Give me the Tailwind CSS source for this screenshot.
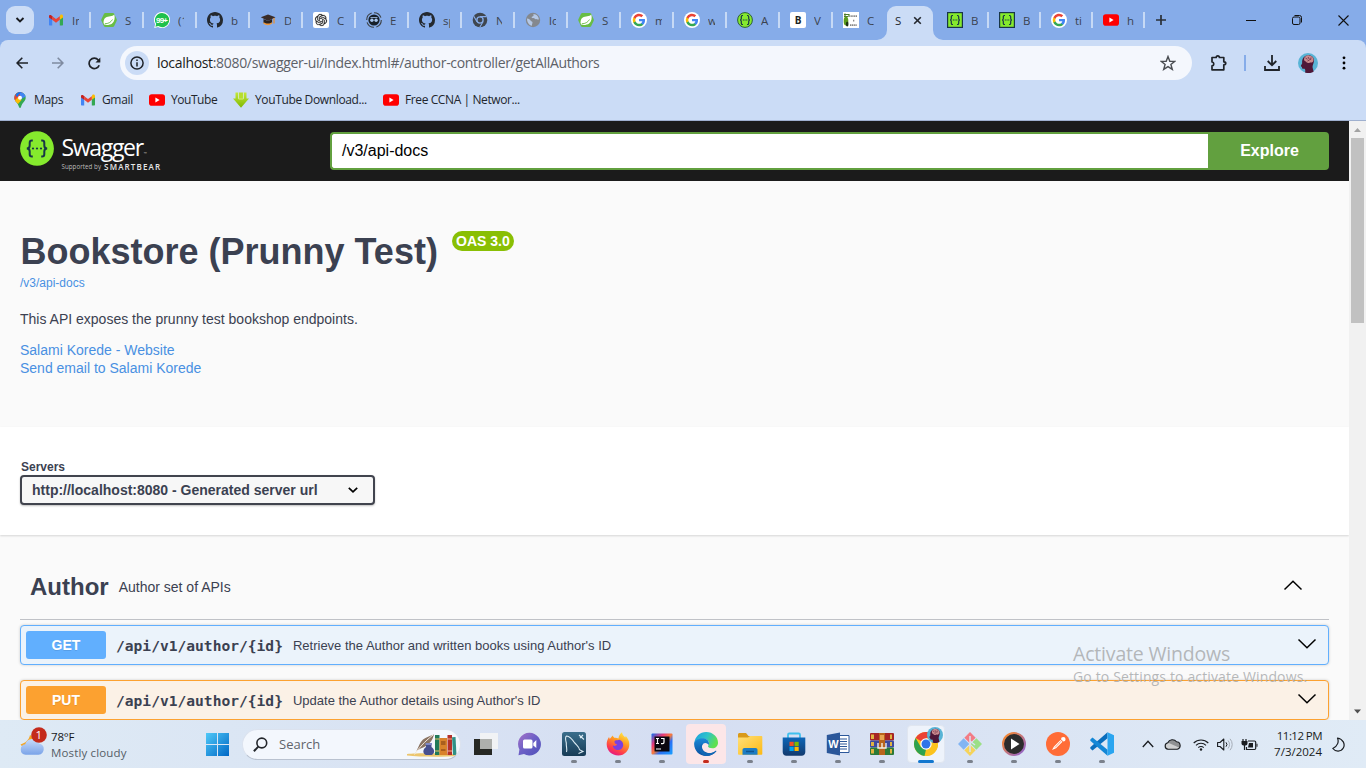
<!DOCTYPE html>
<html lang="en">
<head>
<meta charset="utf-8">
<title>Swagger UI</title>
<script src="https://cdn.jsdelivr.net/npm/@tailwindcss/browser@4"></script>
</head>
<body class="w-[1366px] h-[768px] overflow-hidden bg-[#cbdcf6] font-['Open_Sans','Noto_Sans',sans-serif] flex flex-col">
<svg class="absolute w-0 h-0">
  <defs>
    <linearGradient id="gEdge" x1="0" y1="0" x2="1" y2="0.4"><stop offset="0" stop-color="#1b9de2"/><stop offset=".55" stop-color="#2fc3c9"/><stop offset="1" stop-color="#5fe04f"/></linearGradient>
    <linearGradient id="gEdge2" x1="0" y1="0" x2="0" y2="1"><stop offset="0" stop-color="#1a8ad8"/><stop offset="1" stop-color="#0c4f9e"/></linearGradient>
    <linearGradient id="gWin" x1="0" y1="0" x2="1" y2="1"><stop offset="0" stop-color="#4fc9f8"/><stop offset="1" stop-color="#0067c5"/></linearGradient>
    <linearGradient id="gIJ" x1="0" y1="0" x2="1" y2="1"><stop offset="0" stop-color="#0e6ff0"/><stop offset=".3" stop-color="#e9397a"/><stop offset=".5" stop-color="#f97b3b"/><stop offset=".65" stop-color="#2a6ff5"/><stop offset="1" stop-color="#18a0ff"/></linearGradient>
    <linearGradient id="gFF" x1="0.8" y1="0" x2="0.3" y2="1"><stop offset="0" stop-color="#fff04a"/><stop offset=".4" stop-color="#ff9a22"/><stop offset=".75" stop-color="#ff3f4a"/><stop offset="1" stop-color="#e31587"/></linearGradient>
    <linearGradient id="gChat" x1="0" y1="0" x2="1" y2="1"><stop offset="0" stop-color="#a573c8"/><stop offset=".5" stop-color="#6b5fc6"/><stop offset="1" stop-color="#4f50b8"/></linearGradient>
    <linearGradient id="gFold" x1="0" y1="0" x2="1" y2="1"><stop offset="0" stop-color="#ffe07a"/><stop offset="1" stop-color="#fdb913"/></linearGradient>
    <linearGradient id="gSql" x1="0" y1="0" x2="0" y2="1"><stop offset="0" stop-color="#3a6e8c"/><stop offset="1" stop-color="#173b56"/></linearGradient>
    <linearGradient id="gMed" x1="0" y1="0" x2="1" y2="1"><stop offset="0" stop-color="#ff8a1f"/><stop offset="1" stop-color="#8b62d8"/></linearGradient>
    <linearGradient id="gCloud" x1="0" y1="0" x2="0" y2="1"><stop offset="0" stop-color="#c8dcfb"/><stop offset="1" stop-color="#7aa3e8"/></linearGradient>
    <linearGradient id="gStore" x1="0" y1="0" x2="0" y2="1"><stop offset="0" stop-color="#0c66b8"/><stop offset="1" stop-color="#133a6e"/></linearGradient>
    <linearGradient id="gDl" x1="0" y1="0" x2="0" y2="1"><stop offset="0" stop-color="#c4e83a"/><stop offset="1" stop-color="#7fb800"/></linearGradient>
  </defs>
  <symbol id="gmail" viewBox="0 0 16 16"><path d="M1 4v8.5c0 .6.4 1 1 1h2.2V7z" fill="#4285f4"/><path d="M15 4v8.5c0 .6-.4 1-1 1h-2.200V7z" fill="#34a853"/><path d="M11.800 4.200V7.800L15 5.500V4c0-1.400-1.500-2-2.500-1.200z" fill="#fbbc04"/><path d="M4.200 7.800V4.200L8 7l3.800-2.800v3.600L8 10.700z" fill="#ea4335"/><path d="M1 4v1.500l3.200 2.300V4.200l-.7-.6C2.400 2.700 1 3.200 1 4z" fill="#c5221f"/></symbol>
  <symbol id="spring" viewBox="0 0 16 16"><path d="M4.300 1h7.600c.6 0 1 .3 1.300.8l2.500 5.400c.2.500.2 1 0 1.500l-2.500 5.400c-.3.600-.8.900-1.300.9H4.300c-.6 0-1-.3-1.300-.8L.4 8.700a1.600 1.600 0 0 1 0-1.500L3 1.800C3.300 1.300 3.800 1 4.300 1z" fill="#68bd45"/><path d="M13.300 2.600c.9 3.400.3 7-2.200 8.900-1.900 1.400-5.600 1.900-8 1.100-1.200-2.400-.5-5.800 1.700-7.100C7.200 4.100 11.500 5 13.300 2.600z" fill="#fff"/><path d="M3.800 11.700c3.200.1 6-1.200 7.700-4.200" stroke="#68bd45" stroke-width=".9" fill="none"/></symbol>
  <symbol id="github" viewBox="0 0 16 16"><path fill="#24292f" d="M8 0C3.580 0 0 3.580 0 8c0 3.540 2.290 6.530 5.470 7.590.4.070.55-.17.55-.38 0-.19-.01-.82-.01-1.490-2.010.37-2.530-.49-2.690-.94-.09-.23-.48-.94-.82-1.130-.28-.15-.68-.52-.01-.53.63-.01 1.080.58 1.230.82.72 1.210 1.870.87 2.330.66.07-.52.28-.87.51-1.070-1.780-.2-3.640-.89-3.640-3.950 0-.87.31-1.590.82-2.150-.08-.2-.36-1.020.08-2.120 0 0 .67-.21 2.200.82.64-.18 1.320-.27 2-.27s1.360.09 2 .27c1.530-1.040 2.200-.82 2.200-.82.44 1.100.16 1.920.08 2.120.51.56.82 1.270.82 2.150 0 3.070-1.870 3.750-3.650 3.950.29.25.54.73.54 1.480 0 1.070-.01 1.930-.01 2.200 0 .21.15.46.55.38A8.010 8.010 0 0 0 16 8c0-4.420-3.580-8-8-8z"/></symbol>
  <symbol id="google" viewBox="0 0 16 16"><circle cx="8" cy="8" r="8" fill="#fff"/><g transform="translate(1.700 1.700) scale(.7)"><path d="M17.600 9.200c0-.6-.1-1.200-.2-1.800H9v3.500h4.800a4.100 4.100 0 0 1-1.800 2.700v2.300h2.900c1.700-1.600 2.700-3.900 2.700-6.700z" fill="#4285f4"/><path d="M9 18c2.400 0 4.500-.8 6-2.200l-3-2.200c-.8.500-1.800.9-3 .9-2.300 0-4.300-1.600-5-3.700H1v2.300A9 9 0 0 0 9 18z" fill="#34a853"/><path d="M4 10.700a5.400 5.400 0 0 1 0-3.400V5H1a9 9 0 0 0 0 8z" fill="#fbbc05"/><path d="M9 3.600c1.300 0 2.500.5 3.400 1.300L15 2.300A9 9 0 0 0 1 5l3 2.300C4.700 5.200 6.700 3.600 9 3.600z" fill="#ea4335"/></g></symbol>
  <symbol id="yt" viewBox="0 0 16 16"><rect x="0" y="2.300" width="16" height="11.400" rx="2.800" fill="#f00"/><path d="M6.400 5.600v4.800L10.600 8z" fill="#fff"/></symbol>
  <symbol id="braces" viewBox="0 0 16 16"><g fill="none" stroke="#173647" stroke-width="1.200"><path d="M6 3.500H5.400C4.600 3.500 4.300 4 4.300 4.800V6.500C4.300 7.500 3.800 8 3 8c.8 0 1.300.5 1.300 1.500v1.700c0 .8.300 1.300 1.100 1.300H6"/><path d="M10 3.500h.6c.8 0 1.100.5 1.100 1.300V6.500c0 1 .5 1.500 1.300 1.500-.8 0-1.300.5-1.300 1.500v1.700c0 .8-.3 1.300-1.100 1.300H10"/><path d="M5.800 8h4.600" stroke-dasharray="1.100 .6"/></g></symbol>
  <symbol id="swsq" viewBox="0 0 16 16"><rect x=".6" y=".6" width="14.800" height="14.800" fill="#85ea2d" stroke="#173647" stroke-width="1.200"/><use href="#braces"/></symbol>
  <symbol id="swrd" viewBox="0 0 16 16"><circle cx="8" cy="8" r="7.400" fill="#85ea2d" stroke="#2c5f3a" stroke-width="1"/><use href="#braces"/></symbol>
  <symbol id="avatar" viewBox="0 0 20 20"><circle cx="10" cy="10" r="10" fill="#58b4d6"/><path d="M7 19.500c.6-2 .2-3.500-.5-3.800-1.800.3-2.600 0-2.500-1.500-.1-.7-1.400-.8-1-1.600l1.200-2.300C3.600 6 6 2.300 10.500 2.200c4 0 6 3 5.300 6.800-.4 2.200-1.500 3.500-1.200 5.500l1 4.300c-2.500 1.500-6 1.700-8.600.7z" fill="#4e1738"/><path d="M6 6c.5-2.800 3-4 5-3.600 2.600.1 4.600 2 4.500 4.500-.1 2.200-1.800 3.100-3.500 2.500-1.500 1-3.700.4-4-.8C6.700 8.500 6 7.500 6 6z" fill="#c98a8e"/><path d="M7.500 5l2 1.300M10 4l1.500 2.500M13 4.500l-.5 2.500M9.500 8l2-1" stroke="#6b2740" stroke-width=".8"/></symbol>
  <symbol id="chev" viewBox="0 0 20 12"><path d="M1.500 1.500 10 9.800l8.500-8.300" fill="none" stroke="#000" stroke-width="1.500"/></symbol>
</svg>

<!-- Tab strip -->
<header class="h-[40px] shrink-0 bg-[#86ace9] flex items-stretch text-[11.500px] text-[#3b4350]">
  <div class="w-[38px] shrink-0 pl-[6px] pt-[6px]"><div class="w-[28px] h-[28px] rounded-[9px] bg-[#cbdcf6] flex items-center justify-center"><svg class="w-[10px] h-[8px]" viewBox="0 0 10 8"><path d="M1.500 2 5 5.500 8.500 2" fill="none" stroke="#1a1c20" stroke-width="1.900"/></svg></div></div>
  <div class="flex items-center">
    <div class="w-[53px] h-[16px] pl-[10px] flex border-r-2 border-[#c6d9f5]"><svg class="w-4 h-4 shrink-0"><use href="#gmail"/></svg><span class="ml-[8px] w-[7px] h-[17px] leading-[18px] overflow-hidden whitespace-nowrap">In</span></div>
    <div class="w-[53px] h-[16px] pl-[10px] flex border-r-2 border-[#c6d9f5]"><svg class="w-4 h-4 shrink-0"><use href="#spring"/></svg><span class="ml-[8px] w-[8px] h-[17px] leading-[18px] overflow-hidden whitespace-nowrap">S</span></div>
    <div class="w-[53px] h-[16px] pl-[10px] flex border-r-2 border-[#c6d9f5]"><svg class="w-4 h-4 shrink-0" viewBox="0 0 16 16"><path d="M8 0a8 8 0 1 1-4 14.900L.2 16l1-3.800A8 8 0 0 1 8 0z" fill="#fff"/><path d="M8 .9a7.100 7.100 0 1 1-3.700 13.100l-2.900.8.800-2.800A7.100 7.100 0 0 1 8 .9z" fill="#1fc14c"/><text x="8" y="11" font-size="8" font-weight="700" fill="#fff" text-anchor="middle" textLength="12" font-family="Liberation Sans">99+</text></svg><span class="ml-[8px] w-[6px] h-[17px] leading-[18px] overflow-hidden whitespace-nowrap">(1</span></div>
    <div class="w-[53px] h-[16px] pl-[10px] flex border-r-2 border-[#c6d9f5]"><svg class="w-4 h-4 shrink-0"><use href="#github"/></svg><span class="ml-[8px] w-[8px] h-[17px] leading-[18px] overflow-hidden whitespace-nowrap">b</span></div>
    <div class="w-[53px] h-[16px] pl-[10px] flex border-r-2 border-[#c6d9f5]"><svg class="w-4 h-4 shrink-0" viewBox="0 0 16 16"><path d="M8 2.500 15.500 5.300 8 9 .8 5.300z" fill="#3a2c28"/><path d="M3.500 7v4c2.500 1.800 6.500 1.800 8.600 0V7L8 9z" fill="#2a2321"/><path d="M3.500 10c2.500 2 6.500 2 8.600 0v1.700c-2.500 1.900-6.300 1.900-8.600 0z" fill="#f0993c"/><path d="M14 6v5.500" stroke="#e69138" stroke-width="1.300"/></svg><span class="ml-[8px] w-[7px] h-[17px] leading-[18px] overflow-hidden whitespace-nowrap">D</span></div>
    <div class="w-[53px] h-[16px] pl-[10px] flex border-r-2 border-[#c6d9f5]"><svg class="w-4 h-4 shrink-0" viewBox="0 0 16 16"><rect width="16" height="16" rx="2" fill="#fff"/><g transform="translate(2 2) scale(.5)"><path fill="#222" stroke="#222" stroke-width=".4" d="M22.282 9.821a5.985 5.985 0 0 0-.516-4.910 6.046 6.046 0 0 0-6.510-2.900A6.065 6.065 0 0 0 4.981 4.182a5.985 5.985 0 0 0-3.998 2.900 6.046 6.046 0 0 0 .743 7.097 5.980 5.980 0 0 0 .511 4.911 6.051 6.051 0 0 0 6.515 2.900A5.985 5.985 0 0 0 13.260 24a6.056 6.056 0 0 0 5.772-4.206 5.990 5.990 0 0 0 3.998-2.900 6.056 6.056 0 0 0-.748-7.073zm-9.022 12.608a4.476 4.476 0 0 1-2.876-1.041l.142-.080 4.778-2.759a.795.795 0 0 0 .393-.681v-6.737l2.020 1.169a.071.071 0 0 1 .038.052v5.583a4.504 4.504 0 0 1-4.495 4.494zM3.600 18.304a4.471 4.471 0 0 1-.535-3.014l.142.085 4.783 2.759a.771.771 0 0 0 .780 0l5.843-3.369v2.332a.080.080 0 0 1-.033.062L9.740 19.950a4.499 4.499 0 0 1-6.140-1.646zM2.341 7.896a4.485 4.485 0 0 1 2.366-1.973V11.600a.766.766 0 0 0 .388.677l5.815 3.354-2.020 1.169a.076.076 0 0 1-.071 0l-4.830-2.787A4.504 4.504 0 0 1 2.341 7.872zm16.596 3.856-5.833-3.387L15.119 7.200a.076.076 0 0 1 .071 0l4.830 2.791a4.494 4.494 0 0 1-.676 8.105v-5.678a.790.790 0 0 0-.407-.667zm2.011-3.023-.142-.085-4.774-2.782a.776.776 0 0 0-.785 0L9.409 9.230V6.897a.066.066 0 0 1 .028-.061l4.830-2.787a4.499 4.499 0 0 1 6.680 4.660zM8.307 12.863l-2.020-1.164a.080.080 0 0 1-.038-.057V6.075a4.499 4.499 0 0 1 7.376-3.454l-.142.081-4.778 2.758a.795.795 0 0 0-.393.682zm1.097-2.366 2.602-1.500 2.607 1.500v2.999l-2.597 1.500-2.607-1.500z"/></g></svg><span class="ml-[8px] w-[7px] h-[17px] leading-[18px] overflow-hidden whitespace-nowrap">C</span></div>
    <div class="w-[53px] h-[16px] pl-[10px] flex border-r-2 border-[#c6d9f5]"><svg class="w-4 h-4 shrink-0" viewBox="0 0 16 16"><circle cx="8" cy="8" r="7.300" fill="none" stroke="#3c4043" stroke-width="1.100" stroke-dasharray="9 2.400"/><circle cx="8" cy="8" r="5.600" fill="#17202a"/><circle cx="5.900" cy="8.200" r="1.700" fill="#a8c6ee"/><circle cx="10.100" cy="8.200" r="1.700" fill="#a8c6ee"/><path d="M4.500 5.500h7" stroke="#a8c6ee" stroke-width=".8"/></svg><span class="ml-[8px] w-[7px] h-[17px] leading-[18px] overflow-hidden whitespace-nowrap">E</span></div>
    <div class="w-[53px] h-[16px] pl-[10px] flex border-r-2 border-[#c6d9f5]"><svg class="w-4 h-4 shrink-0"><use href="#github"/></svg><span class="ml-[8px] w-[7px] h-[17px] leading-[18px] overflow-hidden whitespace-nowrap">sp</span></div>
    <div class="w-[53px] h-[16px] pl-[10px] flex border-r-2 border-[#c6d9f5]"><svg class="w-4 h-4 shrink-0" viewBox="0 0 16 16"><circle cx="8" cy="8" r="7.300" fill="#3f464e"/><circle cx="8" cy="8" r="3.100" fill="#3f464e" stroke="#86ace9" stroke-width="1.300"/><path d="M8 4.600h6.500M5 9.700 1.800 4.200M11 9.700l-3.200 5.600" stroke="#86ace9" stroke-width="1.100"/></svg><span class="ml-[8px] w-[6px] h-[17px] leading-[18px] overflow-hidden whitespace-nowrap">N</span></div>
    <div class="w-[53px] h-[16px] pl-[10px] flex border-r-2 border-[#c6d9f5]"><svg class="w-4 h-4 shrink-0" viewBox="0 0 16 16"><circle cx="8" cy="8" r="7.200" fill="#84888e"/><path d="M2 6.500c2 .2 3 1 3.500 2s2 .8 2 2-.7 2-.5 3.200C4 13.300 1.800 10 2 6.500zM8.500 1.900c-.3 1 .5 1.500-.3 2.200-1 .6-1.800.7-1.500 1.600.8.700 2.300.2 3.200 1 1 .8 2.400.6 4 .7-.2-3-2.300-5.300-5.400-5.500z" fill="#b4c8e6"/></svg><span class="ml-[8px] w-[7px] h-[17px] leading-[18px] overflow-hidden whitespace-nowrap">lo</span></div>
    <div class="w-[53px] h-[16px] pl-[10px] flex border-r-2 border-[#c6d9f5]"><svg class="w-4 h-4 shrink-0"><use href="#spring"/></svg><span class="ml-[8px] w-[8px] h-[17px] leading-[18px] overflow-hidden whitespace-nowrap">S</span></div>
    <div class="w-[53px] h-[16px] pl-[10px] flex border-r-2 border-[#c6d9f5]"><svg class="w-4 h-4 shrink-0"><use href="#google"/></svg><span class="ml-[8px] w-[7px] h-[17px] leading-[18px] overflow-hidden whitespace-nowrap">m</span></div>
    <div class="w-[53px] h-[16px] pl-[10px] flex border-r-2 border-[#c6d9f5]"><svg class="w-4 h-4 shrink-0"><use href="#google"/></svg><span class="ml-[8px] w-[7px] h-[17px] leading-[18px] overflow-hidden whitespace-nowrap">w</span></div>
    <div class="w-[53px] h-[16px] pl-[10px] flex border-r-2 border-[#c6d9f5]"><svg class="w-4 h-4 shrink-0"><use href="#swrd"/></svg><span class="ml-[8px] w-[8px] h-[17px] leading-[18px] overflow-hidden whitespace-nowrap">A</span></div>
    <div class="w-[53px] h-[16px] pl-[10px] flex border-r-2 border-[#c6d9f5]"><span class="w-4 h-4 shrink-0 rounded-[2px] bg-white text-[#1b1f24] text-[10px] leading-4 text-center font-bold">B</span><span class="ml-[8px] w-[8px] h-[17px] leading-[18px] overflow-hidden whitespace-nowrap">V</span></div>
    <div class="w-[53px] h-[16px] pl-[10px] flex"><svg class="w-4 h-4 shrink-0" viewBox="0 0 16 16"><rect width="16" height="16" fill="#fff"/><path d="M1 2.500h4.500M1 4.500h4M2 1.500v3M6 2v3" stroke="#4e7a2a" stroke-width="1.200"/><ellipse cx="3" cy="9" rx="2.300" ry="4.500" fill="#5b9a1e"/><ellipse cx="4.200" cy="12" rx="1.300" ry="2.500" fill="#1d3310"/><path d="M7.500 4.200h6.500M10 8.700h1.500M7 13.200h7" stroke="#888" stroke-width="1.800" stroke-dasharray="1.300 .5"/></svg><span class="ml-[8px] w-[7px] h-[17px] leading-[18px] overflow-hidden whitespace-nowrap">C</span></div>
  </div>
  <div class="relative w-[46px] mt-[6px] ml-[1px] mr-[4px] rounded-t-[9px] bg-[#cbdcf6] flex items-center pl-[8px] pb-[6px] text-[#23272e]">
    <span class="w-[8px] mt-[2px]">S</span>
    <svg class="w-[9px] h-[9px] ml-[10px]" viewBox="0 0 9 9"><path d="M1.200 1.200l6.600 6.600M7.800 1.200 1.200 7.800" stroke="#23272e" stroke-width="1.600"/></svg>
    <svg class="absolute -left-[10px] bottom-0 w-[10px] h-[10px]" viewBox="0 0 10 10"><path d="M10 0v10H0A10 10 0 0 0 10 0z" fill="#cbdcf6"/></svg>
    <svg class="absolute -right-[10px] bottom-0 w-[10px] h-[10px]" viewBox="0 0 10 10"><path d="M0 0v10h10A10 10 0 0 1 0 0z" fill="#cbdcf6"/></svg>
  </div>
  <div class="flex items-center">
    <div class="w-[52px] h-[16px] pl-[10px] flex border-r-2 border-[#c6d9f5]"><svg class="w-4 h-4 shrink-0"><use href="#swsq"/></svg><span class="ml-[8px] w-[7px] h-[17px] leading-[18px] overflow-hidden whitespace-nowrap">B</span></div>
    <div class="w-[52px] h-[16px] pl-[10px] flex border-r-2 border-[#c6d9f5]"><svg class="w-4 h-4 shrink-0"><use href="#swsq"/></svg><span class="ml-[8px] w-[7px] h-[17px] leading-[18px] overflow-hidden whitespace-nowrap">B</span></div>
    <div class="w-[52px] h-[16px] pl-[10px] flex border-r-2 border-[#c6d9f5]"><svg class="w-4 h-4 shrink-0"><use href="#google"/></svg><span class="ml-[8px] w-[8px] h-[17px] leading-[18px] overflow-hidden whitespace-nowrap">ti</span></div>
    <div class="w-[52px] h-[16px] pl-[10px] flex border-r-2 border-[#c6d9f5]"><svg class="w-4 h-4 shrink-0"><use href="#yt"/></svg><span class="ml-[8px] w-[7px] h-[17px] leading-[18px] overflow-hidden whitespace-nowrap">h</span></div>
    <svg class="ml-[11px] w-[10px] h-[10px]" viewBox="0 0 10 10"><path d="M5 0v10M0 5h10" stroke="#2a2f37" stroke-width="1.700"/></svg>
  </div>
  <div class="ml-auto pr-[17px] flex items-center gap-[36px]">
    <svg class="w-[10px] h-[10px]" viewBox="0 0 10 10"><path d="M0 5.500h10" stroke="#111" stroke-width="1"/></svg>
    <svg class="w-[10px] h-[10px]" viewBox="0 0 10 10"><rect x=".5" y="2" width="7.500" height="7.500" rx="1.500" fill="none" stroke="#111"/><path d="M2.500.5H7.500A2 2 0 0 1 9.500 2.500V7.500" fill="none" stroke="#111"/></svg>
    <svg class="w-[11px] h-[11px]" viewBox="0 0 11 11"><path d="M.5.500l10 10M10.500.500l-10 10" stroke="#111" stroke-width="1.100"/></svg>
  </div>
</header>

<!-- Toolbar and bookmarks -->
<section class="h-[81px] shrink-0 bg-[#86ace9]">
  <div class="h-full rounded-t-[8px] bg-[#cbdcf6] border-b border-[#9fb0cf] flex flex-col">
    <div class="h-[46px] flex items-center">
      <svg class="ml-[16px] w-[12px] h-[12px]" viewBox="0 0 12 12"><path d="M12 6H1.200M6.300.800 1.100 6l5.200 5.200" fill="none" stroke="#1f2329" stroke-width="1.600"/></svg>
      <svg class="ml-[24px] w-[12px] h-[12px]" viewBox="0 0 12 12"><path d="M0 6h10.800M5.700.800 10.900 6l-5.200 5.200" fill="none" stroke="#7f8ba0" stroke-width="1.600"/></svg>
      <svg class="ml-[24px] w-[13px] h-[13px]" viewBox="0 0 13 13"><path d="M11.200 8.200A5.200 5.200 0 1 1 10.300 3l1.500 1.500" fill="none" stroke="#1f2329" stroke-width="1.700"/><path d="M12.300.600v4.900H7.500z" fill="#1f2329"/></svg>
      <div class="ml-[19px] w-[1072px] h-[34px] rounded-full bg-[#f4f7fd] flex items-center">
        <div class="ml-[5px] w-[24px] h-[24px] rounded-full bg-[#cbdcf6] flex items-center justify-center"><svg class="w-[14px] h-[14px]" viewBox="0 0 14 14"><circle cx="7" cy="7" r="6.100" fill="none" stroke="#1f2329" stroke-width="1.500"/><path d="M7 6.200v4.200M7 3.500v1.500" stroke="#1f2329" stroke-width="1.500"/></svg></div>
        <span class="ml-[8px] text-[14px] leading-[20px] tracking-[-0.32px] whitespace-nowrap text-[#5d6168]"><span class="text-[#1b1d21]">localhost</span>:8080/swagger-ui/index.html#/author-controller/getAllAuthors</span>
        <svg class="ml-auto mr-[16px] w-[16px] h-[16px]" viewBox="0 0 16 16"><path d="M8 1.500l1.800 4.700 5 .2-3.900 3.100 1.400 4.900L8 11.600l-4.300 2.800 1.400-4.900L1.200 6.400l5-.2z" fill="none" stroke="#4a4d52" stroke-width="1.400"/></svg>
      </div>
      <svg class="ml-[18px] w-[18px] h-[18px]" viewBox="0 0 18 18"><path d="M2 3.500h4.200c0-2.300 3.200-2.300 3.200 0h4.400v4.300c2.600 0 2.600 3 0 3V15.800H2v-4c2.400-.2 2.400-3.600 0-3.800z" fill="none" stroke="#1f2329" stroke-width="1.700" stroke-linejoin="round"/></svg>
      <div class="ml-[16px] w-[2px] h-[16px] bg-[#86ace9]"></div>
      <svg class="ml-[18px] w-[16px] h-[18px]" viewBox="0 0 16 18"><path d="M8 1v10M3.700 7 8 11.200 12.300 7M1 12v4h14v-4" fill="none" stroke="#1f2329" stroke-width="1.800"/></svg>
      <svg class="ml-[18px] w-[20px] h-[20px]"><use href="#avatar"/></svg>
      <svg class="ml-[24px] w-[4px] h-[14px]" viewBox="0 0 4 14"><circle cx="2" cy="1.800" r="1.400"/><circle cx="2" cy="7" r="1.400"/><circle cx="2" cy="12.200" r="1.400"/></svg>
    </div>
    <div class="h-[28px] flex items-center text-[12px] tracking-[-0.35px] text-[#22262d] whitespace-nowrap">
      <svg class="ml-[12px] w-4 h-4" viewBox="0 0 16 16"><clipPath id="pin"><path d="M8 0a5.700 5.700 0 0 1 5.700 5.700c0 3.400-3.500 4.600-4.700 9.300-.3 1.300-1.700 1.300-2 0C5.800 10.300 2.300 9.100 2.300 5.700A5.700 5.700 0 0 1 8 0z"/></clipPath><g clip-path="url(#pin)"><path d="M0 0h16v16H0z" fill="#34a853"/><path d="M0-1h11L8 5.700 3 11H0z" fill="#ea4335"/><path d="M7-1h9v4.500L9 7z" fill="#4285f4"/><path d="M7-1h3L5 5.300 3.300 2.500z" fill="#1a73e8"/><path d="M2 9.500 6 5l3.500 3L6 12z" fill="#fbbc04"/></g><circle cx="8" cy="5.700" r="2" fill="#fff"/></svg>
      <span class="ml-[6px] w-[46px]">Maps</span>
      <svg class="w-4 h-4"><use href="#gmail"/></svg>
      <span class="ml-[6px] w-[47px]">Gmail</span>
      <svg class="w-4 h-4"><use href="#yt"/></svg>
      <span class="ml-[6px] w-[62px] tracking-[-0.45px]">YouTube</span>
      <svg class="w-4 h-4" viewBox="0 0 16 16"><path d="M2.500.5h2.700v6h5.600v-6h2.700v6H16L8 15.800 0 6.500h2.500z" fill="url(#gDl)"/><path d="M6 .5h4v7H6z" fill="#b6de2c"/><path d="M5.600.5v6.500h4.800V.5" fill="none" stroke="#dff0a0" stroke-width=".6"/></svg>
      <span class="ml-[6px] w-[128px] tracking-[-0.36px]">YouTube Download...</span>
      <svg class="w-4 h-4"><use href="#yt"/></svg>
      <span class="ml-[6px] tracking-[-0.4px]">Free CCNA | Networ...</span>
    </div>
  </div>
</section>

<!-- Page viewport -->
<main class="h-[599px] shrink-0 flex overflow-hidden font-['Liberation_Sans',Arial,sans-serif] text-[#3b4151] bg-[#fafafa]">
  <div class="w-[1349px] h-[599px] overflow-hidden">
    <div class="h-[60px] bg-[#1b1b1b] flex items-center pl-[20px] pr-[20px]">
      <div class="w-[310px] h-[60px] flex">
        <svg class="mt-[10px] w-[34px] h-[35px]" viewBox="0 0 34 35"><ellipse cx="17" cy="17.500" rx="16.900" ry="17.200" fill="#85ea2d"/><g fill="none" stroke="#173647" stroke-width="2"><path d="M12.800 9.500h-.9c-1.500 0-2.200.7-2.200 2.200v2.800c0 1.800-.7 3-2.900 3 2.200 0 2.900 1.200 2.900 3v2.800c0 1.500.7 2.200 2.200 2.200h.9"/><path d="M21.200 9.500h.9c1.500 0 2.200.7 2.200 2.200v2.800c0 1.800.7 3 2.900 3-2.200 0-2.900 1.200-2.900 3v2.800c0 1.500-.7 2.200-2.200 2.200h-.9"/></g><g fill="#173647"><circle cx="13" cy="17.500" r="1.100"/><circle cx="17" cy="17.500" r="1.100"/><circle cx="21" cy="17.500" r="1.100"/></g></svg>
        <div class="ml-[7.500px] mt-[12px] text-white font-['Open_Sans',sans-serif]">
          <div class="flex h-[29px]"><span class="text-[23px] leading-[29px] tracking-[-1.320px]">Swagger</span><span class="ml-[1px] text-[4px] leading-[42px] text-[#bbb]">™</span></div>
          <div class="flex items-center h-[10px] whitespace-nowrap"><span class="text-[6.200px] text-[#bdbdbd] tracking-[0.050px]">Supported by</span><span class="ml-[3px] text-[8px] font-semibold tracking-[1.150px] text-[#e6e6e6]">SMARTBEAR</span></div>
        </div>
      </div>
      <div class="w-[878px] h-[38px] border-2 border-r-0 border-[#62a03f] rounded-l-[4px] bg-white pl-[10px] leading-[34px] text-[16px] text-black">/v3/api-docs</div>
      <div class="w-[121px] h-[38px] bg-[#62a03f] rounded-r-[4px] pl-[2px] text-white font-bold text-[16px] leading-[37px] text-center">Explore</div>
    </div>
    <div class="h-[246px] pl-[20px] pt-[48px]">
      <div class="flex h-[45px] pl-[0.500px]"><h1 class="text-[36px] leading-[45px] font-bold whitespace-nowrap">Bookstore (Prunny Test)</h1><span class="ml-[14px] mt-[2px] w-[62px] h-[20px] rounded-full bg-[#89bf04] text-white text-[14px] font-bold leading-[20px] text-center whitespace-nowrap">OAS 3.0</span></div>
      <div class="text-[12px] leading-[18px] text-[#4990e2]">/v3/api-docs</div>
      <div class="mt-[17px] text-[14px] leading-[20px]">This API exposes the prunny test bookshop endpoints.</div>
      <div class="mt-[12px] text-[14px] leading-[18px] text-[#4990e2]">Salami Korede - Website<br>Send email to Salami Korede</div>
    </div>
    <div class="h-[108px] bg-white shadow-[0_1px_2px_rgba(0,0,0,0.15)] pl-[20px] pt-[32px]">
      <div class="text-[12px] leading-[16px] font-bold pl-[1px]">Servers</div>
      <div class="w-[355px] h-[30px] border-2 border-[#41444e] rounded-[4px] bg-[#f7f7f7] shadow-[0_1px_2px_rgba(0,0,0,0.25)] flex items-center pl-[10px] pr-[15px] text-[14px] font-bold"><span>http://localhost:8080 - Generated server url</span><svg class="ml-auto w-[10px] h-[6px]" viewBox="0 0 10 6"><path d="M.800.800 5 4.800 9.200.800" fill="none" stroke="#000" stroke-width="1.700"/></svg></div>
    </div>
    <div class="pl-[20px] pr-[20px] pt-[20px]">
      <div class="h-[65px] border-b border-[#c0c2c7] pl-[10px] pr-[26px] flex items-center">
        <h2 class="text-[24px] font-bold">Author</h2><span class="ml-[10px] text-[14px]">Author set of APIs</span>
        <svg class="ml-auto mb-[4px] w-[20px] h-[12px] rotate-180"><use href="#chev"/></svg>
      </div>
      <div class="mt-[5px] h-[40px] border border-[#61affe] rounded-[4px] bg-[#ebf3fb] shadow-[0_0_3px_rgba(0,0,0,0.19)] flex items-center pl-[5px] pr-[11px]">
        <span class="w-[80px] h-[28px] rounded-[3px] bg-[#61affe] text-white text-[14px] font-bold leading-[28px] text-center [text-shadow:0_1px_0_rgba(0,0,0,0.1)]">GET</span>
        <span class="ml-[10px] mt-[2px] font-['DejaVu_Sans_Mono',monospace] font-bold text-[14.600px]">/api/v1/author/{id}</span>
        <span class="ml-[10px] mt-[2px] text-[13px]">Retrieve the Author and written books using Author's ID</span>
        <svg class="ml-auto mb-[2px] w-[20px] h-[12px]"><use href="#chev"/></svg>
      </div>
      <div class="mt-[15px] h-[40px] border border-[#fca130] rounded-[4px] bg-[#fbf1e6] shadow-[0_0_3px_rgba(0,0,0,0.19)] flex items-center pl-[5px] pr-[11px]">
        <span class="w-[80px] h-[28px] rounded-[3px] bg-[#fca130] text-white text-[14px] font-bold leading-[28px] text-center [text-shadow:0_1px_0_rgba(0,0,0,0.1)]">PUT</span>
        <span class="ml-[10px] mt-[2px] font-['DejaVu_Sans_Mono',monospace] font-bold text-[14.600px]">/api/v1/author/{id}</span>
        <span class="ml-[10px] mt-[2px] text-[13px]">Update the Author details using Author's ID</span>
        <svg class="ml-auto mb-[2px] w-[20px] h-[12px]"><use href="#chev"/></svg>
      </div>
    </div>
  </div>
  <div class="w-[17px] bg-[#f1f1f1] flex flex-col items-center">
    <svg class="w-[17px] h-[17px]" viewBox="0 0 17 17"><path d="M5 11h7L8.500 7z" fill="#a3a3a3"/></svg>
    <div class="w-[13px] h-[185px] bg-[#c1c1c1]"></div>
    <svg class="mt-auto w-[17px] h-[17px]" viewBox="0 0 17 17"><path d="M5 6.500h7L8.500 10.500z" fill="#505050"/></svg>
  </div>
</main>

<!-- Windows activation watermark, over the page -->
<div class="absolute left-[1073px] top-[640px] text-[#a9abad]/85 whitespace-nowrap pointer-events-none">
  <div class="text-[19.500px] leading-[28px] tracking-[-0.180px]">Activate Windows</div>
  <div class="text-[14px] leading-[18px] tracking-[0.140px]">Go to Settings to activate Windows.</div>
</div>

<!-- Taskbar -->
<footer class="h-[48px] shrink-0 bg-linear-to-r from-[#deeaf5] via-[#d5def2] to-[#e0ebf6] flex items-center">
  <div class="w-[206px] h-full flex pl-[20px]">
    <svg class="mt-[5px] w-[28px] h-[36px]" viewBox="0 0 28 36"><path d="M10 10c-1 5-4.500 8-9.500 9.500C3 23 6.500 24 10 22l6-8z" fill="#f5a524"/><path d="M6 29.800a5.300 5.300 0 0 1-.3-10.500A7.300 7.300 0 0 1 19.500 18.500a5.700 5.700 0 0 1-.5 11.300z" fill="url(#gCloud)" transform="translate(-.5 0)"/><circle cx="19" cy="10" r="7.800" fill="#c42b1c"/><text x="18.900" y="14.100" font-size="11.500" fill="#fff" text-anchor="middle" font-family="Open Sans">1</text></svg>
    <div class="ml-[3px] mt-[9px] text-[11.500px] leading-[16px] whitespace-nowrap"><div class="text-[#15181c] tracking-[-0.200px]">78°F</div><div class="text-[#555d66] tracking-[0.150px]">Mostly cloudy</div></div>
  </div>
  <svg class="w-[23px] h-[23px]" viewBox="0 0 23 23"><path d="M0 0h11v11H0zM12 0h11v11H12zM0 12h11v11H0zM12 12h11v11H12z" fill="url(#gWin)"/></svg>
  <div class="ml-[13px] w-[219px] h-[31px] rounded-full bg-[#f3f7fd] border border-[#dbe2ee] border-b-[#b9c2d0] flex items-center overflow-hidden">
    <svg class="ml-[10px] w-[15px] h-[15px]" viewBox="0 0 15 15"><circle cx="8.800" cy="6" r="4.900" fill="none" stroke="#24272c" stroke-width="1.600"/><path d="M5.300 9.600.900 14.200" stroke="#24272c" stroke-width="2"/></svg>
    <span class="ml-[11px] mt-px text-[13px] text-[#5f646b]">Search</span>
    <svg class="ml-auto w-[54px] h-[29px]" viewBox="0 0 54 29"><path d="M1 24C10 23 35 23 54 24v2C36 27 14 27 1 25.500z" fill="#ecc66e"/><path d="M8.500 24C12 20 12.500 14 17 9.500 20 7 24 6 28 4.500c-1 5-4 9-8 11.500-4 2.300-7 3-9.500 5z" fill="#8a7463"/><path d="M8.500 24.500C13 18 18 12 27 5" stroke="#f3e9dc" stroke-width="1" fill="none"/><path d="M20 17c-3.500 2-3.500 7 0 8h5.500c3.500-1 3.500-6 0-8v-3H20z" fill="#47508f"/><rect x="19.500" y="13" width="6.500" height="2" fill="#7f88c4"/><rect x="29" y="5" width="4.500" height="20" fill="#1f7a58"/><path d="M29 9h4.500M29 21h4.500" stroke="#e9c46a"/><rect x="33.500" y="8" width="7.500" height="17" fill="#d9822b"/><path d="M35 12h4.500M35 14h4.500M35 20h4.500" stroke="#7b3a12"/><rect x="41.500" y="5" width="4.500" height="20" fill="#b5302a"/><path d="M41.500 9H46M41.500 21H46" stroke="#f0b58a"/><rect x="46.500" y="7" width="3.500" height="18" fill="#2f8f86" transform="rotate(-3 49 16)"/></svg>
  </div>
  <div class="ml-[3px] flex items-center">
    <div class="w-[44px] h-[48px] flex flex-col items-center pt-[12px]"><svg class="w-[24px] h-[24px]" viewBox="0 0 24 24"><path d="M0 7h18v16H0z" fill="#262824"/><path d="M6 1h18v16H6z" fill="#f4f5f5" fill-opacity=".9"/><path d="M6 7h12v10H6z" fill="#aeb0ad"/></svg></div>
    <div class="w-[44px] h-[48px] flex flex-col items-center pt-[12px]"><svg class="w-[24px] h-[24px]" viewBox="0 0 24 24"><path d="M11.500.8a11.300 11.300 0 1 1-5.500 21.100L.5 23.300l.9-5.800A11.300 11.300 0 0 1 11.500.8z" fill="url(#gChat)"/><rect x="5" y="7.500" width="9.500" height="9" rx="1.500" fill="#fff"/><path d="M15.300 11 18.300 8v8L15.300 13.500z" fill="#fff"/></svg></div>
    <div class="w-[44px] h-[48px] flex flex-col items-center pt-[12px]"><svg class="w-[24px] h-[24px]" viewBox="0 0 24 24"><rect width="24" height="24" rx="2.500" fill="url(#gSql)"/><path d="M4.500 20C5.500 17 4 15 4.300 11 3.500 8 2.800 5 4.500 4c3 .2 6 3.700 8 6.700 2 2.500 4.500 4 5 7l3.500 1.800-4.500 2M17 3l5 4.500M18 6l3-3" fill="none" stroke="#dcebf3" stroke-width="1.100"/></svg><i class="mt-[4px] w-[6px] h-[3px] rounded-full bg-[#7b818c]"></i></div>
    <div class="w-[44px] h-[48px] flex flex-col items-center pt-[12px]"><svg class="w-[24px] h-[24px]" viewBox="0 0 24 24"><path d="M12.500 23.500C5.500 23.500.700 18.500.700 12.300c0-3 .8-5 2.300-7.300l.8 2c1-1.500 2-2 2.500-3.500l2 2.300c1.500-.3 3 0 4.200.7C12.500 4 14 2 16 .3c.3 2.500 1.700 3.500 3.200 5.200l.6-1.500c2.300 2.800 3.500 5 3.500 8.500 0 6-4.800 11-10.800 11z" fill="url(#gFF)"/><path d="M8.500 9c2-1.500 4-.5 5-1.300 2.500 1.300 4 3 3.700 6-.6 2.800-2.700 4.300-5.200 4.300-2.700 0-5-2-5.200-4.500 1.800 1 3 .3 4.500-.7-1-.6-3-.8-2.800-3.800z" fill="#7a3fe0"/></svg><i class="mt-[4px] w-[6px] h-[3px] rounded-full bg-[#7b818c]"></i></div>
    <div class="w-[44px] h-[48px] flex flex-col items-center pt-[12px]"><svg class="w-[24px] h-[24px]" viewBox="0 0 24 24"><rect x="1.500" y="1.500" width="21" height="21" rx="1" fill="url(#gIJ)"/><rect x="4.500" y="4.500" width="15" height="15" fill="#0b0710"/><path d="M6 6.500h3M7.500 6.500v5M6 11.500h3M11 6.500h3v3.800c0 1-.5 1.300-1.300 1.300H11M6 17h5" fill="none" stroke="#fff" stroke-width="1.200"/></svg><i class="mt-[4px] w-[6px] h-[3px] rounded-full bg-[#7b818c]"></i></div>
    <div class="w-[44px] h-[48px] flex justify-center pt-[4px]"><div class="w-[40px] h-[40px] rounded-[4px] bg-[#fce6e8] flex flex-col items-center pt-[8px]"><svg class="w-[24px] h-[24px] shrink-0" viewBox="0 0 24 24"><path d="M.3 11C1 4.500 6 0 12.200 0 19 0 24 5 24 10.700c0 3.500-2.600 5.600-5.500 5.600-2.800 0-4.500-1-4.500-2 0-.8 1-1 1-3 0-2.500-2.300-4.600-5.600-4.600C5.500 6.700 1.500 8.500.3 11z" fill="url(#gEdge)"/><path d="M.1 12C0 8.500 4.500 6.200 8.800 6.200c3.700 0 6.200 2.500 6.200 5.100 0 .7-.2 1.200-.4 1.600C13.500 11 11 10.200 9.200 11.700c-2.200 2-1.500 6.500 2.800 8.600 3.500 1.700 7.500.9 9.800-1.500.4-.4.8 0 .5.500C20 22.500 16.300 24 12 24 5.500 24 .3 19 .1 12z" fill="url(#gEdge2)"/><path d="M9.200 11.700C6 14 7.500 21 15 21.200c2.800 0 5-.8 6.800-2.400l.5.500C20 22.500 16.300 24 12 24 7 23 5 18.500 5.500 15.500c.4-2 1.700-3.300 3.700-3.800z" fill="#1267b4"/></svg><i class="mt-[4px] w-[6px] h-[3px] shrink-0 rounded-full bg-[#c42b1c]"></i></div></div>
    <div class="w-[44px] h-[48px] flex flex-col items-center pt-[12px]"><svg class="w-[26px] h-[24px]" viewBox="0 0 26 24"><path d="M1 2.500C1 1.700 1.700 1 2.500 1H9l2.500 3H24v4H1z" fill="#d99a1b"/><path d="M1 5.500h10L13 4h11.500c.5 0 .8.300.8.800V22c0 .5-.3.800-.8.800H2c-.6 0-1-.3-1-.8z" fill="url(#gFold)"/><path d="M5.500 22.800V18c0-1.200.8-2 2-2h11c1.200 0 2 .8 2 2v4.800z" fill="#1c7cc4"/><path d="M9 19.500h8" stroke="#10548f" stroke-width="1.500"/></svg><i class="mt-[4px] w-[6px] h-[3px] rounded-full bg-[#7b818c]"></i></div>
    <div class="w-[44px] h-[48px] flex flex-col items-center pt-[12px]"><svg class="w-[24px] h-[24px]" viewBox="0 0 24 24"><path d="M6 6V2.800C6 2 6.500 1.500 7.300 1.500h9.400c.8 0 1.300.5 1.300 1.300V6" fill="none" stroke="#3fc0ee" stroke-width="1.800"/><path d="M.700 5.500h22.600V20c0 2.300-1.500 3.700-3.700 3.700H4.400C2.200 23.700.700 22.300.700 20z" fill="url(#gStore)"/><path d="M7.500 9.800h4.200V14H7.500z" fill="#f25022"/><path d="M12.500 9.800h4.200V14h-4.200z" fill="#7fba00"/><path d="M7.500 14.800h4.200V19H7.500z" fill="#00a4ef"/><path d="M12.500 14.800h4.200V19h-4.200z" fill="#ffb900"/></svg><i class="mt-[4px] w-[6px] h-[3px] rounded-full bg-[#7b818c]"></i></div>
    <div class="w-[44px] h-[48px] flex flex-col items-center pt-[12px]"><svg class="w-[24px] h-[24px]" viewBox="0 0 24 24"><path d="M13 3.500h10v17H13z" fill="#fff" stroke="#2b579a"/><path d="M14 7h7M14 9.500h7M14 12h7M14 14.500h7M14 17h7" stroke="#2b579a" stroke-width="1.100"/><path d="M.800 3 14 .6v22.800L.800 21z" fill="#2b579a"/><text x="7.500" y="16" font-size="11" font-weight="700" fill="#fff" text-anchor="middle" font-family="Liberation Sans">W</text></svg><i class="mt-[4px] w-[6px] h-[3px] rounded-full bg-[#7b818c]"></i></div>
    <div class="w-[44px] h-[48px] flex flex-col items-center pt-[12px]"><svg class="w-[24px] h-[24px]" viewBox="0 0 24 24"><rect y="1" width="24" height="7.500" rx="1" fill="#a62525"/><rect y="8.500" width="24" height="7" rx="1" fill="#3d4a9e"/><rect y="15.500" width="24" height="7.500" rx="1" fill="#2c7a38"/><path d="M1 2.500h3v4.500H1zM1 10h3v4H1zM1 17h3v4.500H1zM20 2.500h2v4.500h-2zM20 10h2v4h-2zM20 17h2v4.500h-2z" fill="#e0b440"/><path d="M9 1h6v22H9z" fill="#b9651d"/><path d="M10 3h4v5h-4z" fill="#e8a552"/><path d="M8 11v5h8v-5M12 11v5" fill="none" stroke="#f4efe6" stroke-width="1.400"/></svg><i class="mt-[4px] w-[6px] h-[3px] rounded-full bg-[#7b818c]"></i></div>
    <div class="w-[44px] h-[48px] flex justify-center pt-[5px]"><div class="relative w-[38px] h-[38px] rounded-[4px] bg-[#eef3fb] border border-[#e0e6f0] flex flex-col items-center pt-[6px]"><svg class="w-[24px] h-[24px] shrink-0" viewBox="0 0 24 24"><circle cx="12" cy="12" r="12" fill="#fcc31e"/><path d="M12 12 1.600 6A12 12 0 0 1 22.400 6H12z" fill="#ea4335"/><path d="M1.600 6 6.800 15 12 12v5.500L10.500 23.900A12 12 0 0 1 1.600 6z" fill="#2fa24f"/><path d="M12 6h10.400A12 12 0 0 1 11.500 24L17 15z" fill="#fcc31e"/><circle cx="12" cy="12" r="5.700" fill="#fff"/><circle cx="12" cy="12" r="4.500" fill="#2f74e8"/></svg><svg class="absolute right-[1px] top-[1px] w-[16px] h-[16px]"><use href="#avatar"/></svg><i class="mt-[4px] w-[16px] h-[3px] shrink-0 rounded-full bg-[#1277cf]"></i></div></div>
    <div class="w-[44px] h-[48px] flex flex-col items-center pt-[12px]"><svg class="w-[24px] h-[24px]" viewBox="0 0 24 24"><g transform="rotate(45 12 12)"><rect x="3.500" y="3.500" width="8" height="8" fill="#f27c85"/><rect x="12.500" y="3.500" width="8" height="8" fill="#9bdf86"/><rect x="3.500" y="12.500" width="8" height="8" fill="#82b5f3"/><rect x="12.500" y="12.500" width="8" height="8" fill="#f5d35a"/></g><path d="M12 4v16M12 9l5 4" stroke="#dbe2f2" stroke-width="1.500"/></svg><i class="mt-[4px] w-[6px] h-[3px] rounded-full bg-[#7b818c]"></i></div>
    <div class="w-[44px] h-[48px] flex flex-col items-center pt-[12px]"><svg class="w-[24px] h-[24px]" viewBox="0 0 24 24"><circle cx="12" cy="12" r="11" fill="#2c2c2c" stroke="url(#gMed)" stroke-width="2"/><path d="M9 6.500v11l8.500-5.500z" fill="#fff"/></svg><i class="mt-[4px] w-[6px] h-[3px] rounded-full bg-[#7b818c]"></i></div>
    <div class="w-[44px] h-[48px] flex flex-col items-center pt-[12px]"><svg class="w-[24px] h-[24px]" viewBox="0 0 24 24"><circle cx="12" cy="12" r="12" fill="#ff6c37"/><path d="M6 18l2-3.500L14.500 8l2 1.800-6.500 6.500zM15 7.300a2.300 2.300 0 1 1 2.300 2.300z" fill="#fff"/><path d="M9 15.500 15 9.200" stroke="#ff6c37" stroke-width=".7"/></svg><i class="mt-[4px] w-[6px] h-[3px] rounded-full bg-[#7b818c]"></i></div>
    <div class="w-[44px] h-[48px] flex flex-col items-center pt-[12px]"><svg class="w-[24px] h-[24px]" viewBox="0 0 24 24"><path d="M17.500.3v5.900L2.500 18.400.3 16.500v-1.300z" fill="#0a6ebd"/><path d="M17.500 23.700v-5.900L2.500 5.600.3 7.500v1.300z" fill="#1487d6"/><path d="M17.500.3 24 3.300v17.400l-6.500 3z" fill="#2aa5f0"/></svg><i class="mt-[4px] w-[6px] h-[3px] rounded-full bg-[#7b818c]"></i></div>
  </div>
  <div class="ml-auto flex items-center pr-[20px]">
    <svg class="w-[12px] h-[8px]" viewBox="0 0 12 8"><path d="M.800 7 6 1.300 11.200 7" fill="none" stroke="#1a1d21" stroke-width="1.300"/></svg>
    <svg class="ml-[10px] w-[17px] h-[12px]" viewBox="0 0 17 12"><path d="M4 11.300A3.300 3.300 0 0 1 3.800 4.800 5 5 0 0 1 12.500 3.800a3.800 3.800 0 0 1 .7 7.500z" fill="#8f9193"/><path d="M1 8.500C1.500 5.500 4 4 6.500 5.800L15 9.500c-.3 1.200-.8 1.800-1.800 1.800H4C2.200 11.300 1 10 1 8.500z" fill="#cfd0d1"/><path d="M4 11.300A3.300 3.300 0 0 1 3.800 4.800 5 5 0 0 1 12.500 3.800a3.800 3.800 0 0 1 .7 7.500z" fill="none" stroke="#1a1d21" stroke-width="1.100"/></svg>
    <svg class="ml-[12px] w-[16px] h-[13px]" viewBox="0 0 16 13"><g fill="none" stroke="#1a1d21" stroke-width="1.100"><path d="M.700 5a10.300 10.300 0 0 1 14.600 0"/><path d="M3 7.400a7 7 0 0 1 10 0"/><path d="M5.300 9.600a3.800 3.800 0 0 1 5.400 0"/></g><circle cx="8" cy="11.500" r="1.200" fill="#1a1d21"/></svg>
    <svg class="ml-[8px] w-[16px] h-[13px]" viewBox="0 0 16 13"><path d="M.600 4.500H3L6.800 1v11L3 8.500H.600z" fill="none" stroke="#1a1d21" stroke-width="1.100" stroke-linejoin="round"/><path d="M9 4.300a3.300 3.300 0 0 1 0 4.400" fill="none" stroke="#1a1d21"/><path d="M11 2.500a6 6 0 0 1 0 8M13 .8a8.500 8.500 0 0 1 0 11.400" fill="none" stroke="#a5acb6"/></svg>
    <svg class="ml-[8px] w-[17px] h-[13px]" viewBox="0 0 17 13"><path d="M7 3h6.500c.8 0 1.200.4 1.200 1.200v6.100c0 .8-.4 1.200-1.200 1.200H5.500V9" fill="none" stroke="#1a1d21" stroke-width="1.200"/><path d="M8 5h4v4.500H7z" fill="#1a1d21"/><path d="M15.500 5.700h1v3h-1z" fill="#1a1d21"/><path d="M.500 3h6v2.500c0 1-1 2-2 2h-2c-1 0-2-1-2-2z" fill="#1a1d21"/><path d="M2 1v2M5 1v2M3.500 7v5" stroke="#1a1d21" stroke-width="1.200"/></svg>
    <div class="ml-[14px] w-[50px] text-right text-[11.500px] leading-[16px] text-[#1a1d21] whitespace-nowrap"><div class="tracking-[-0.550px]">11:12 PM</div><div>7/3/2024</div></div>
    <svg class="ml-[10px] mr-px w-[13px] h-[15px]" viewBox="0 0 13 15"><path d="M5.500 1C7 4.500 6 9 .800 11.500 3.500 15 9 15 11.300 11 13.500 7 11 2 5.500 1z" fill="none" stroke="#1a1d21" stroke-width="1.200" stroke-linejoin="round"/></svg>
  </div>
</footer>
</body>
</html>
